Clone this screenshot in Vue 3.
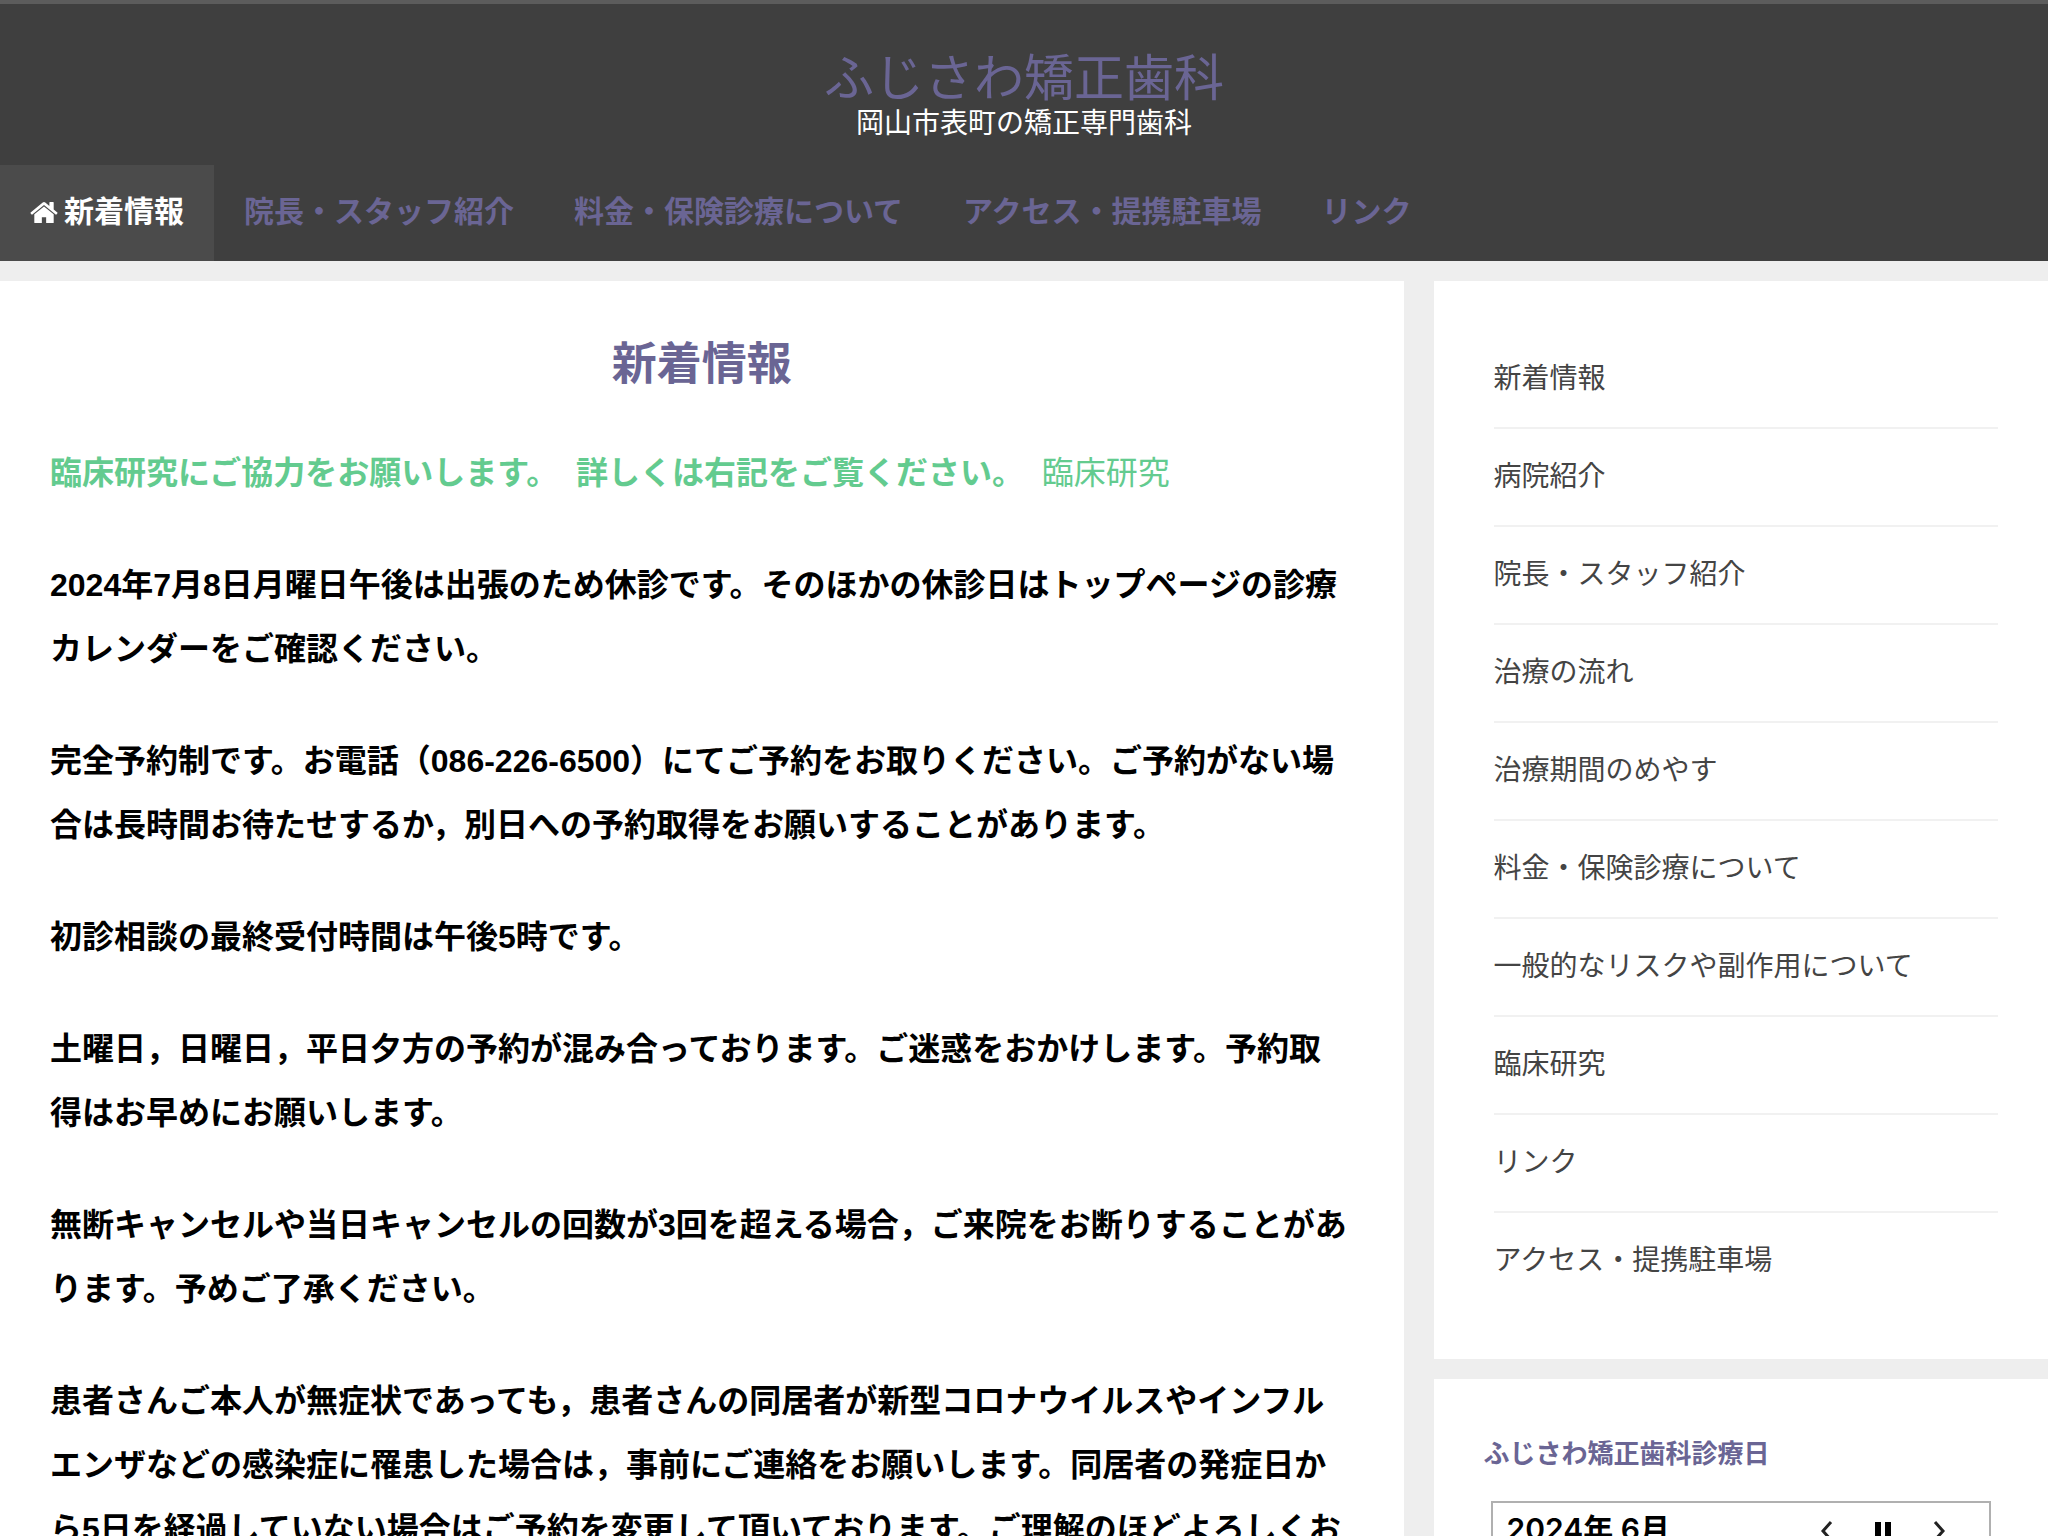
<script setup>
const nav = [
  '院長・スタッフ紹介',
  '料金・保険診療について',
  'アクセス・提携駐車場',
  'リンク',
]

const menu = [
  '新着情報',
  '病院紹介',
  '院長・スタッフ紹介',
  '治療の流れ',
  '治療期間のめやす',
  '料金・保険診療について',
  '一般的なリスクや副作用について',
  '臨床研究',
  'リンク',
  'アクセス・提携駐車場',
]

const notices = [
  '2024年7月8日月曜日午後は出張のため休診です。そのほかの休診日はトップページの診療カレンダーをご確認ください。',
  '完全予約制です。お電話（086-226-6500）にてご予約をお取りください。ご予約がない場合は長時間お待たせするか，別日への予約取得をお願いすることがあります。',
  '初診相談の最終受付時間は午後5時です。',
  '土曜日，日曜日，平日夕方の予約が混み合っております。ご迷惑をおかけします。予約取得はお早めにお願いします。',
  '無断キャンセルや当日キャンセルの回数が3回を超える場合，ご来院をお断りすることがあります。予めご了承ください。',
  '患者さんご本人が無症状であっても，患者さんの同居者が新型コロナウイルスやインフルエンザなどの感染症に罹患した場合は，事前にご連絡をお願いします。同居者の発症日から5日を経過していない場合はご予約を変更して頂いております。ご理解のほどよろしくお',
]
</script>

<template>
  <div class="page" lang="ja">
    <header class="site-header">
      <a class="site-title" href="#">ふじさわ矯正歯科</a>
      <p class="site-description">岡山市表町の矯正専門歯科</p>
      <nav class="site-nav">
        <a class="nav-link current" href="#">
          <svg class="home-icon" viewBox="0 0 1664 1344" aria-hidden="true">
            <path
              fill="currentColor"
              d="M1408 800v480q0 26-19 45t-45 19H960V960H704v384H320q-26 0-45-19t-19-45V800q0-1 .5-3t.5-3l575-474 575 474q1 2 1 6zm223-69-62 74q-8 9-21 11h-3q-13 0-21-7L832 232 140 809q-12 8-24 7-13-2-21-11l-62-74q-8-10-7-23.500t11-21.500L756 87q32-26 76-26t76 26l244 204V96q0-14 9-23t23-9h192q14 0 23 9t9 23v408l219 182q10 8 11 21.500t-7 23.500z"
            />
          </svg>
          新着情報
        </a>
        <a v-for="item in nav" :key="item" class="nav-link" href="#">{{ item }}</a>
      </nav>
    </header>

    <div class="content">
      <main class="panel article">
        <h1>新着情報</h1>
        <p class="research">
          <strong>臨床研究にご協力をお願いします。&nbsp; 詳しくは右記をご覧ください。</strong>&nbsp;
          <a href="#">臨床研究</a>
        </p>
        <p v-for="notice in notices" :key="notice" class="notice">{{ notice }}</p>
      </main>

      <aside class="sidebar">
        <section class="panel widget">
          <ul class="menu">
            <li v-for="item in menu" :key="item"><a href="#">{{ item }}</a></li>
          </ul>
        </section>
        <section class="panel widget">
          <h2>ふじさわ矯正歯科診療日</h2>
          <div class="calendar">
            <span class="month">2024年 6月</span>
            <div class="controls">
              <button type="button" aria-label="前の月">
                <svg viewBox="0 0 20 20"><path d="M14 1 6 10l8 9" /></svg>
              </button>
              <button type="button" aria-label="今月">
                <svg viewBox="0 0 20 20"><path class="bars" d="M5 1v18M15 1v18" /></svg>
              </button>
              <button type="button" aria-label="次の月">
                <svg viewBox="0 0 20 20"><path d="m6 1 8 9-8 9" /></svg>
              </button>
            </div>
          </div>
        </section>
      </aside>
    </div>
  </div>
</template>

<style>
body {
  margin: 0;
  background: #eeeeee;
}
</style>

<style scoped>
.page {
  height: 100vh;
  overflow: hidden;
  font-family: "Liberation Sans", "Noto Sans CJK JP", sans-serif;
  color: #000;
}

a {
  color: inherit;
  text-decoration: none;
}

.site-header {
  border-top: 4px solid #5c5c5c;
  background: #3f3f3f;
  text-align: center;
}

.site-title {
  display: block;
  padding-top: 50px;
  font-size: 50px;
  line-height: 50px;
  color: #6a6594;
}

.site-description {
  margin: 0 0 21px;
  font-size: 28px;
  line-height: 40px;
  color: #fff;
}

.site-nav {
  display: flex;
}

.nav-link {
  display: flex;
  align-items: center;
  gap: 6px;
  padding: 0 30px 2px;
  font-size: 30px;
  font-weight: 700;
  line-height: 94px;
  color: #6a6594;
}

.nav-link.current {
  background: #4b4b4b;
  color: #fff;
}

.home-icon {
  width: 28px;
}

.content {
  display: flex;
  gap: 30px;
  margin-top: 20px;
}

.panel {
  background: #fff;
}

.article {
  flex: 1;
  min-width: 0;
  padding: 52px 50px 50px;
}

h1 {
  margin: 0 0 44px;
  font-size: 45px;
  line-height: 64px;
  text-align: center;
  color: #6a6594;
}

.article p {
  margin: 0 0 48px;
  font-size: 32px;
  line-height: 64px;
}

.article .research {
  color: #63cb8f;
}

.article .notice {
  padding-right: 4px;
  font-weight: 700;
}

.sidebar {
  display: flex;
  flex-direction: column;
  gap: 20px;
  width: 30%;
}

.widget {
  padding: 50px;
}

.menu {
  margin: 0;
  padding: 0 0 0 10px;
  list-style: none;
  font-size: 28px;
  line-height: 96px;
  color: #444;
}

.menu li + li {
  border-top: 2px solid #f1f1f1;
}

h2 {
  margin: 0 0 22px;
  font-size: 26px;
  line-height: 50px;
  color: #6a6594;
}

.calendar {
  display: flex;
  justify-content: space-between;
  margin: 0 7px;
  padding: 0 40px 0 14px;
  border: 2px solid #b0b0b0;
}

.month {
  font-family: Inter, "Noto Sans CJK JP", sans-serif;
  font-size: 30px;
  font-weight: 600;
  line-height: 52px;
}

.controls {
  display: flex;
  align-items: center;
  gap: 36px;
  padding-top: 4px;
}

button {
  padding: 0;
  border: 0;
  background: none;
}

button svg {
  display: block;
  width: 20px;
  fill: none;
  stroke: #222;
  stroke-width: 3;
}

button .bars {
  stroke: #000;
  stroke-width: 6;
}
</style>
